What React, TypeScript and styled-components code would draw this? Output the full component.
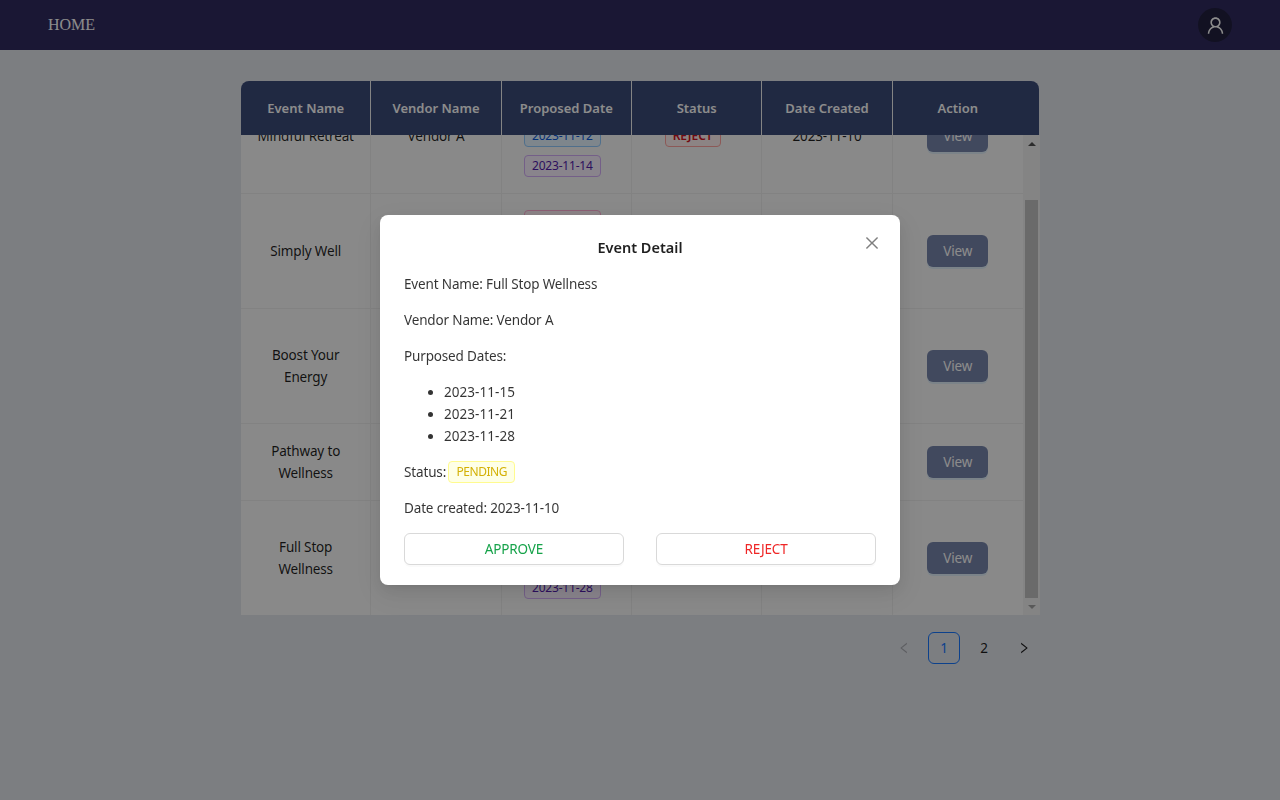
import React, { useLayoutEffect, useRef } from "react";
import styled, { createGlobalStyle } from "styled-components";
import { AiOutlineClose, AiOutlineLeft, AiOutlineRight, AiOutlineUser } from "react-icons/ai";

type TagColor = "magenta" | "blue" | "purple" | "red" | "yellow" | "green";

interface EventRow {
  name: string;
  vendor: string;
  dates: string[];
  status: string;
  statusColor: TagColor;
  created: string;
}

const tagColors: Record<TagColor, { fg: string; bg: string; line: string }> = {
  magenta: { fg: "#c41d7f", bg: "#fff0f6", line: "#ffadd2" },
  blue: { fg: "#0958d9", bg: "#e6f4ff", line: "#91caff" },
  purple: { fg: "#531dab", bg: "#f9f0ff", line: "#d3adf7" },
  red: { fg: "#cf1322", bg: "#fff1f0", line: "#ffa39e" },
  yellow: { fg: "#d4b106", bg: "#feffe6", line: "#fffb8f" },
  green: { fg: "#389e0d", bg: "#f6ffed", line: "#b7eb8f" },
};

const dateOrder: TagColor[] = ["magenta", "blue", "purple"];

const rows: EventRow[] = [
  { name: "Mindful Retreat", vendor: "Vendor A", dates: ["2023-11-10", "2023-11-12", "2023-11-14"], status: "REJECT", statusColor: "red", created: "2023-11-10" },
  { name: "Simply Well", vendor: "Vendor B", dates: ["2023-11-16", "2023-11-18", "2023-11-20"], status: "PENDING", statusColor: "yellow", created: "2023-11-10" },
  { name: "Boost Your Energy", vendor: "Vendor A", dates: ["2023-11-15", "2023-11-17", "2023-11-19"], status: "APPROVED", statusColor: "green", created: "2023-11-10" },
  { name: "Pathway to Wellness", vendor: "Vendor B", dates: ["2023-11-22"], status: "PENDING", statusColor: "yellow", created: "2023-11-10" },
  { name: "Full Stop Wellness", vendor: "Vendor A", dates: ["2023-11-15", "2023-11-21", "2023-11-28"], status: "PENDING", statusColor: "yellow", created: "2023-11-10" },
];

const headers = ["Event Name", "Vendor Name", "Proposed Date", "Status", "Date Created", "Action"];

const App = () => {
  const listRef = useRef<HTMLDivElement>(null);

  // the list sits scrolled to its end
  useLayoutEffect(() => {
    if (listRef.current) listRef.current.scrollTop = listRef.current.scrollHeight;
  }, []);

  return (
    <>
      <GlobalStyle />
      <NavBar>
        <HomeLink>HOME</HomeLink>
        <Avatar>
          <AiOutlineUser size={21} />
        </Avatar>
      </NavBar>

      <Main>
        <TableWrap>
          <HeadRow>
            {headers.map((h) => (
              <HeadCell key={h}>{h}</HeadCell>
            ))}
          </HeadRow>
          <TableBody>
            <RowList ref={listRef}>
              {rows.map((row) => (
                <Row key={row.name}>
                  <Cell>{row.name}</Cell>
                  <Cell>{row.vendor}</Cell>
                  <Cell>
                    <TagStack>
                      {row.dates.map((d, i) => (
                        <Tag key={d} $color={dateOrder[i]}>
                          {d}
                        </Tag>
                      ))}
                    </TagStack>
                  </Cell>
                  <Cell>
                    <StatusTag $color={row.statusColor}>{row.status}</StatusTag>
                  </Cell>
                  <Cell>{row.created}</Cell>
                  <Cell>
                    <ViewButton>View</ViewButton>
                  </Cell>
                </Row>
              ))}
            </RowList>
            <ScrollTrack>
              <ScrollArrow $up />
              <ScrollRail>
                <ScrollThumb />
              </ScrollRail>
              <ScrollArrow />
            </ScrollTrack>
          </TableBody>
        </TableWrap>

        <Pagination>
          <PageArrow $disabled>
            <AiOutlineLeft size={14} />
          </PageArrow>
          <PageItem $active>1</PageItem>
          <PageItem>2</PageItem>
          <PageArrow>
            <AiOutlineRight size={14} />
          </PageArrow>
        </Pagination>
      </Main>

      <Mask>
        <Modal>
          <CloseButton>
            <AiOutlineClose size={18} />
          </CloseButton>
          <ModalTitle>Event Detail</ModalTitle>
          <Line>Event Name: Full Stop Wellness</Line>
          <Line>Vendor Name: Vendor A</Line>
          <Line>Purposed Dates:</Line>
          <DateList>
            <li>2023-11-15</li>
            <li>2023-11-21</li>
            <li>2023-11-28</li>
          </DateList>
          <Line>
            Status: <ModalTag $color="yellow">PENDING</ModalTag>
          </Line>
          <Line>Date created: 2023-11-10</Line>
          <ModalActions>
            <ActionButton $tone="#16a34a">APPROVE</ActionButton>
            <ActionButton $tone="#ef2626">REJECT</ActionButton>
          </ModalActions>
        </Modal>
      </Mask>
    </>
  );
};

const uiFont = `"Noto Sans", "Open Sans", sans-serif`;

const GlobalStyle = createGlobalStyle`
  html, body {
    margin: 0;
    height: 100%;
    overflow: hidden;
  }
  body {
    background: #e2e5ec;
    font-family: ${uiFont};
    font-size: 13.5px;
    letter-spacing: -0.15px;
    color: rgba(0, 0, 0, 0.88);
  }
`;

const NavBar = styled.header`
  height: 50px;
  background: #312b60;
  display: flex;
  align-items: center;
  justify-content: space-between;
  padding: 0 48px;
`;

const HomeLink = styled.a`
  font-family: "Liberation Serif", serif;
  font-size: 16px;
  letter-spacing: 0;
  color: #fff;
`;

const Avatar = styled.div`
  width: 34px;
  height: 34px;
  border-radius: 50%;
  background: #22203f;
  color: #fff;
  display: flex;
  align-items: center;
  justify-content: center;
`;

const Main = styled.main`
  width: 800px;
  margin: 31px auto 0;
`;

const TableWrap = styled.section`
  margin-left: 1px;
  width: 799px;
`;

const HeadRow = styled.div`
  width: 798px;
  height: 54px;
  box-sizing: border-box;
  padding-right: 16px;
  background: #3b4b79;
  border-radius: 8px 8px 0 0;
  display: grid;
  grid-template-columns: repeat(6, 1fr);
`;

const HeadCell = styled.div`
  display: flex;
  align-items: center;
  justify-content: center;
  color: #fff;
  font-size: 13px;
  font-weight: 600;
  letter-spacing: 0;
  border-right: 1px solid #f0f0f0;

  &:last-child {
    border-right: none;
  }
`;

const TableBody = styled.div`
  height: 480px;
  display: flex;
  background: #fafafa;
`;

const RowList = styled.div`
  flex: 1;
  overflow: hidden;
`;

const Row = styled.div`
  display: grid;
  grid-template-columns: repeat(6, 1fr);
  border-bottom: 1px solid #ededed;

  &:last-child {
    border-bottom: none;
  }
`;

const Cell = styled.div`
  display: flex;
  align-items: center;
  justify-content: center;
  padding: 16px;
  text-align: center;
  line-height: 22px;
  border-right: 1px solid #ededed;

  &:last-child {
    border-right: none;
  }
`;

const ScrollTrack = styled.div`
  width: 17px;
  display: flex;
  flex-direction: column;
  background: #f1f1f1;
`;

const ScrollArrow = styled.div<{ $up?: boolean }>`
  height: 17px;
  display: flex;
  align-items: center;
  justify-content: center;

  &::before {
    content: "";
    border-left: 4px solid transparent;
    border-right: 4px solid transparent;
    ${(p) => (p.$up ? "border-bottom: 4px solid #505050;" : "border-top: 4px solid #a3a3a3;")}
  }
`;

const ScrollRail = styled.div`
  flex: 1;
  display: flex;
  padding: 48px 2px 0;
`;

const ScrollThumb = styled.div`
  flex: 1;
  background: #c1c1c1;
`;

const TagStack = styled.div`
  display: flex;
  flex-direction: column;
  align-items: center;
  gap: 8px;
  margin-right: 8px;
`;

const Tag = styled.span<{ $color: TagColor }>`
  display: inline-block;
  vertical-align: top;
  height: 22px;
  box-sizing: border-box;
  padding: 0 7px;
  font-size: 12px;
  letter-spacing: -0.2px;
  line-height: 20px;
  border-radius: 4px;
  color: ${(p) => tagColors[p.$color].fg};
  background: ${(p) => tagColors[p.$color].bg};
  border: 1px solid ${(p) => tagColors[p.$color].line};
`;

const StatusTag = styled(Tag)`
  margin-right: 8px;
  font-weight: 600;
  letter-spacing: 0;
`;

const ModalTag = styled(Tag)`
  margin-left: -1px;
  letter-spacing: -0.45px;
`;

const ViewButton = styled.button`
  width: 61px;
  height: 32px;
  border: none;
  border-radius: 6px;
  background: #7785ab;
  color: #fff;
  font-family: ${uiFont};
  font-size: 13.5px;
  letter-spacing: -0.15px;
  box-shadow: 0 2px 0 rgba(5, 145, 255, 0.1);
`;

const Pagination = styled.nav`
  display: flex;
  justify-content: flex-end;
  gap: 8px;
  margin-top: 17px;
`;

const PageItem = styled.div<{ $active?: boolean }>`
  width: 32px;
  height: 32px;
  box-sizing: border-box;
  display: flex;
  align-items: center;
  justify-content: center;
  border-radius: 6px;
  color: ${(p) => (p.$active ? "#1677ff" : "rgba(0, 0, 0, 0.88)")};
  border: 1px solid ${(p) => (p.$active ? "#1677ff" : "transparent")};
`;

const PageArrow = styled(PageItem)<{ $disabled?: boolean }>`
  color: ${(p) => (p.$disabled ? "rgba(0, 0, 0, 0.25)" : "rgba(0, 0, 0, 0.88)")};
`;

const Mask = styled.div`
  position: fixed;
  inset: 0;
  background: rgba(0, 0, 0, 0.45);
  display: flex;
  align-items: center;
  justify-content: center;
`;

const Modal = styled.div`
  position: relative;
  width: 520px;
  box-sizing: border-box;
  padding: 20px 24px;
  background: #fff;
  border-radius: 8px;
  box-shadow: 0 6px 16px rgba(0, 0, 0, 0.08), 0 3px 6px -4px rgba(0, 0, 0, 0.12),
    0 9px 28px 8px rgba(0, 0, 0, 0.05);
`;

const CloseButton = styled.div`
  position: absolute;
  top: 19px;
  right: 19px;
  width: 18px;
  height: 18px;
  color: rgba(0, 0, 0, 0.5);
  display: flex;
`;

const ModalTitle = styled.h2`
  margin: 0 0 14px;
  font-size: 14.5px;
  font-weight: 600;
  letter-spacing: 0;
  line-height: 24px;
  text-align: center;
`;

const Line = styled.p`
  margin: 0 0 14px;
  line-height: 22px;
  color: rgba(0, 0, 0, 0.8);
`;

const DateList = styled.ul`
  margin: 0 0 14px;
  padding-left: 40px;
  line-height: 22px;
  letter-spacing: 0.05px;
  color: rgba(0, 0, 0, 0.8);
`;

const ModalActions = styled.div`
  display: grid;
  grid-template-columns: 1fr 1fr;
  gap: 32px;
`;

const ActionButton = styled.button<{ $tone: string }>`
  height: 32px;
  background: #fff;
  border: 1px solid #d9d9d9;
  border-radius: 6px;
  font-family: ${uiFont};
  font-size: 13.5px;
  letter-spacing: -0.15px;
  color: ${(p) => p.$tone};
  box-shadow: 0 2px 0 rgba(0, 0, 0, 0.02);
`;

export default App;
